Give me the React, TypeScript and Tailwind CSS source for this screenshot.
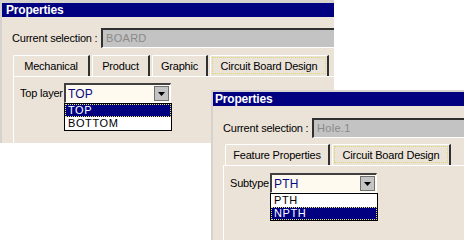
import React from "react";

function Arrow() {
  return (
    <svg width="7" height="4" viewBox="0 0 7 4">
      <path d="M0 0H7L3.5 4Z" fill="#000" />
    </svg>
  );
}

function TextBox({ value }: { value: string }) {
  return (
    <div className="flex-1 h-[20px] bg-[#c3c3c3] border-t-2 border-l-2 border-t-[#303030] border-l-[#303030] border-b border-b-white flex items-center pl-[3px] text-[#8a8a8a] tracking-[0.3px]">
      {value}
    </div>
  );
}

function Tab({ label, w, selected }: { label: string; w: string; selected?: boolean }) {
  return (
    <div
      className={`${w} h-[21px] border-t border-l border-white border-r-2 border-r-[#303030] rounded-tl-[2px] flex items-center justify-center ${
        selected ? "relative" : ""
      }`}
    >
      {selected ? (
        <div className="absolute left-[1px] right-[1px] top-[1px] bottom-[2px] border border-dotted border-[#d8d870]" />
      ) : null}
      <span className="relative">{label}</span>
    </div>
  );
}

function Combo({
  value,
  items,
  sel,
  w,
}: {
  value: string;
  items: string[];
  sel: number;
  w: string;
}) {
  return (
    <div className={`relative ${w} h-[20px]`}>
      <div className="h-full bg-[#fffaf0] border-t-2 border-l-2 border-t-[#404040] border-l-[#404040] border-b border-r border-b-white border-r-white flex items-center">
        <span className="flex-1 pl-[2px] text-[#0a0a80] text-[12px] tracking-[0.2px]">{value}</span>
        <div className="w-[15px] h-[15px] mr-[1px] bg-[#c4c4c4] border border-[#707070] flex items-center justify-center">
          <Arrow />
        </div>
      </div>
      <div className="absolute left-0 top-[20px] w-[108px] bg-white border border-black flex flex-col z-10">
        {items.map((it, i) => (
          <div
            key={it}
            className={
              i === sel
                ? "h-[13px] leading-[11px] bg-[#000080] text-white border border-dotted border-[#e8e860] pl-[2px] text-[11px] tracking-[0.6px]"
                : "h-[13px] leading-[13px] text-black pl-[3px] text-[11px] tracking-[0.6px]"
            }
          >
            {it}
          </div>
        ))}
      </div>
    </div>
  );
}

export default function App() {
  return (
    <div className="relative w-[464px] h-[240px] bg-white overflow-hidden font-['Liberation_Sans',Arial,sans-serif] text-[11px] tracking-[-0.2px] text-black">
      {/* Window 1 */}
      <div className="absolute left-0 top-0 w-[334px] h-[143px] bg-[#ebe3d8] border-t-[3px] border-l-2 border-[#d6d3ce] flex flex-col">
        <div className="h-[14px] bg-[#000080] text-white font-bold text-[12px] leading-[14px] pl-[4px] tracking-[-0.2px]">
          Properties
        </div>
        <div className="flex items-center mt-[11px]">
          <span className="ml-[10px] w-[89px]">Current selection :</span>
          <TextBox value="BOARD" />
        </div>
        <div className="flex items-end gap-[2px] mt-[7px] ml-[11px]">
          <Tab label="Mechanical" w="w-[77px]" />
          <Tab label="Product" w="w-[58px]" />
          <Tab label="Graphic" w="w-[56px]" />
          <Tab label="Circuit Board Design" w="w-[119px]" selected />
        </div>
        <div className="flex-1 ml-[11px] border-t border-l border-white pt-[6px]">
          <div className="flex items-center">
            <span className="ml-[6px] w-[44px]">Top layer</span>
            <Combo value="TOP" items={["TOP", "BOTTOM"]} sel={0} w="w-[107px]" />
          </div>
        </div>
      </div>

      {/* Window 2 */}
      <div className="absolute left-[211px] top-[90px] w-[256px] h-[150px] bg-[#ebe3d8] border-t-2 border-l-2 border-[#d6d3ce] flex flex-col">
        <div className="h-[14px] bg-[#000080] text-white font-bold text-[12px] leading-[14px] pl-[2px] tracking-[-0.2px]">
          Properties
        </div>
        <div className="flex items-center mt-[12px]">
          <span className="ml-[10px] w-[89px]">Current selection :</span>
          <TextBox value="Hole.1" />
        </div>
        <div className="flex items-end gap-[2px] mt-[6px] ml-[12px]">
          <Tab label="Feature Properties" w="w-[105px]" />
          <Tab label="Circuit Board Design" w="w-[119px]" selected />
        </div>
        <div className="flex-1 ml-[10px] border-t border-l border-white pt-[7px]">
          <div className="flex items-center">
            <span className="ml-[6px] w-[40px]">Subtype</span>
            <Combo value="PTH" items={["PTH", "NPTH"]} sel={1} w="w-[107px]" />
          </div>
        </div>
      </div>
    </div>
  );
}
